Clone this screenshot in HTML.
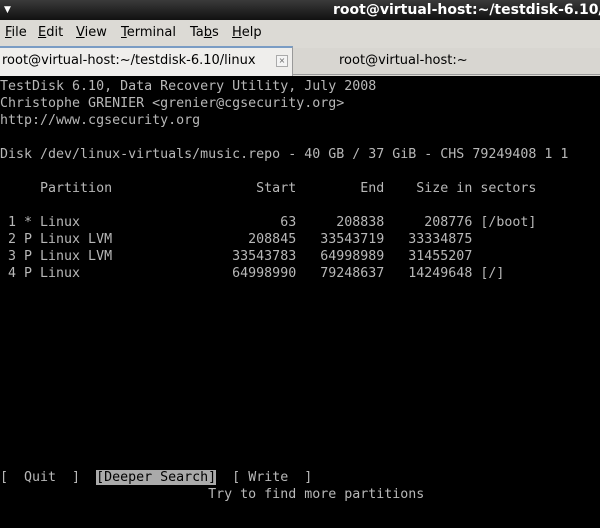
<!DOCTYPE html><html><head><style>
body{margin:0;width:600px;height:528px;background:#000;overflow:hidden;position:relative;font-family:"DejaVu Sans","Liberation Sans",sans-serif}
#title{position:absolute;left:0;top:0;width:600px;height:20px;background:linear-gradient(#3a3a3a,#111);color:#fff;font-weight:bold;font-size:14px;line-height:20px;overflow:hidden}
#menu{position:absolute;top:20px;left:0;width:600px;height:26px;background:#dcdad5;font-size:13px;line-height:26px;color:#000}
#menu span{position:absolute}
#tabs{position:absolute;top:46px;left:0;width:600px;height:30px;background:#dcdad5}
.t{position:absolute;font-size:13px;line-height:26px;color:#000;white-space:nowrap;overflow:hidden}
pre{position:absolute;left:0;top:78px;margin:0;font-family:"DejaVu Sans Mono","Liberation Mono",monospace;font-size:13.3px;line-height:17px;color:#b8b8b8}
.h{background:#aaa;color:#000}
</style></head><body>
<div id="title"><span style="position:absolute;left:4px;font-size:9px">▼</span><span style="position:absolute;left:333px;white-space:nowrap">root@virtual-host:~/testdisk-6.10/linux</span></div>
<div id="menu"><span style="left:5px"><u>F</u>ile</span><span style="left:38px"><u>E</u>dit</span><span style="left:76px"><u>V</u>iew</span><span style="left:121px"><u>T</u>erminal</span><span style="left:190px">Ta<u>b</u>s</span><span style="left:232px"><u>H</u>elp</span></div>
<div id="tabs">
<div class="t" style="left:0;top:0;width:292px;height:28px;background:#efeeec;border-top:2px solid #7a9cc4;border-right:1px solid #999"><span style="margin-left:2px">root@virtual-host:~/testdisk-6.10/linux</span><span style="position:absolute;left:276px;top:7px;width:10px;height:10px;border:1px solid #aaa;font-size:8px;line-height:10px;text-align:center;color:#666;background:#f4f4f4">×</span></div>
<div class="t" style="left:293px;top:2px;width:307px;height:26px;background:#d8d6d1;border-bottom:1px solid #999"><span style="margin-left:46px">root@virtual-host:~</span></div>
</div>
<pre>TestDisk 6.10, Data Recovery Utility, July 2008
Christophe GRENIER &lt;grenier@cgsecurity.org&gt;
http://www.cgsecurity.org

Disk /dev/linux-virtuals/music.repo - 40 GB / 37 GiB - CHS 79249408 1 1

     Partition                  Start        End    Size in sectors

 1 * Linux                         63     208838     208776 [/boot]
 2 P Linux LVM                 208845   33543719   33334875
 3 P Linux LVM               33543783   64998989   31455207
 4 P Linux                   64998990   79248637   14249648 [/]
 










[  Quit  ]  <span class="h">[Deeper Search]</span>  [ Write  ]
                          Try to find more partitions</pre>
</body></html>
